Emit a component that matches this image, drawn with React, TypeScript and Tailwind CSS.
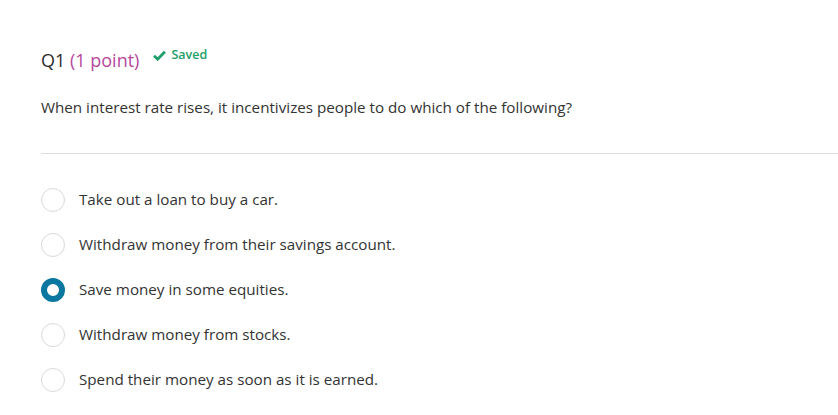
import { useState } from "react";

const options = [
  "Take out a loan to buy a car.",
  "Withdraw money from their savings account.",
  "Save money in some equities.",
  "Withdraw money from stocks.",
  "Spend their money as soon as it is earned.",
];

export default function App() {
  const [selected, setSelected] = useState(2);

  return (
    <div
      className="min-h-screen bg-white pl-[41px] pt-[42px] text-[#333]"
      style={{ fontFamily: '"Open Sans", "Noto Sans", sans-serif' }}
    >
      {/* Header */}
      <div className="flex items-start gap-[14px]">
        <h2 className="text-[18px] leading-[36px] font-medium text-[#2d2d2d]">
          Q1 <span className="font-normal text-[#b6489d]">(1 point)</span>
        </h2>
        <span className="flex items-center gap-[5px] pt-[4px] text-[12.5px] font-semibold text-[#1e9e6a]">
          <svg width="13" height="11" viewBox="0 0 12 10" fill="none">
            <path d="M1 5.2L4.3 8.4L11 1.6" stroke="#1e9e6a" strokeWidth="2.6" />
          </svg>
          Saved
        </span>
      </div>

      <p className="mt-[19px] text-[15.2px] leading-[20px] text-[#333]">
        When interest rate rises, it incentivizes people to do which of the following?
      </p>

      <div className="mt-[36px] border-t border-[#dddddd]" />

      {/* Options */}
      <div className="mt-[23px] flex flex-col">
        {options.map((opt, i) => (
          <label
            key={opt}
            className="flex h-[45px] cursor-pointer items-center gap-[14px]"
            onClick={() => setSelected(i)}
          >
            <span
              className={
                i === selected
                  ? "h-[24px] w-[24px] rounded-full border-[6px] border-[#0a77a0] bg-white"
                  : "h-[24px] w-[24px] rounded-full border border-[#d9d9d9] bg-white"
              }
            />
            <span className="text-[15.2px] text-[#333]">{opt}</span>
          </label>
        ))}
      </div>
    </div>
  );
}
